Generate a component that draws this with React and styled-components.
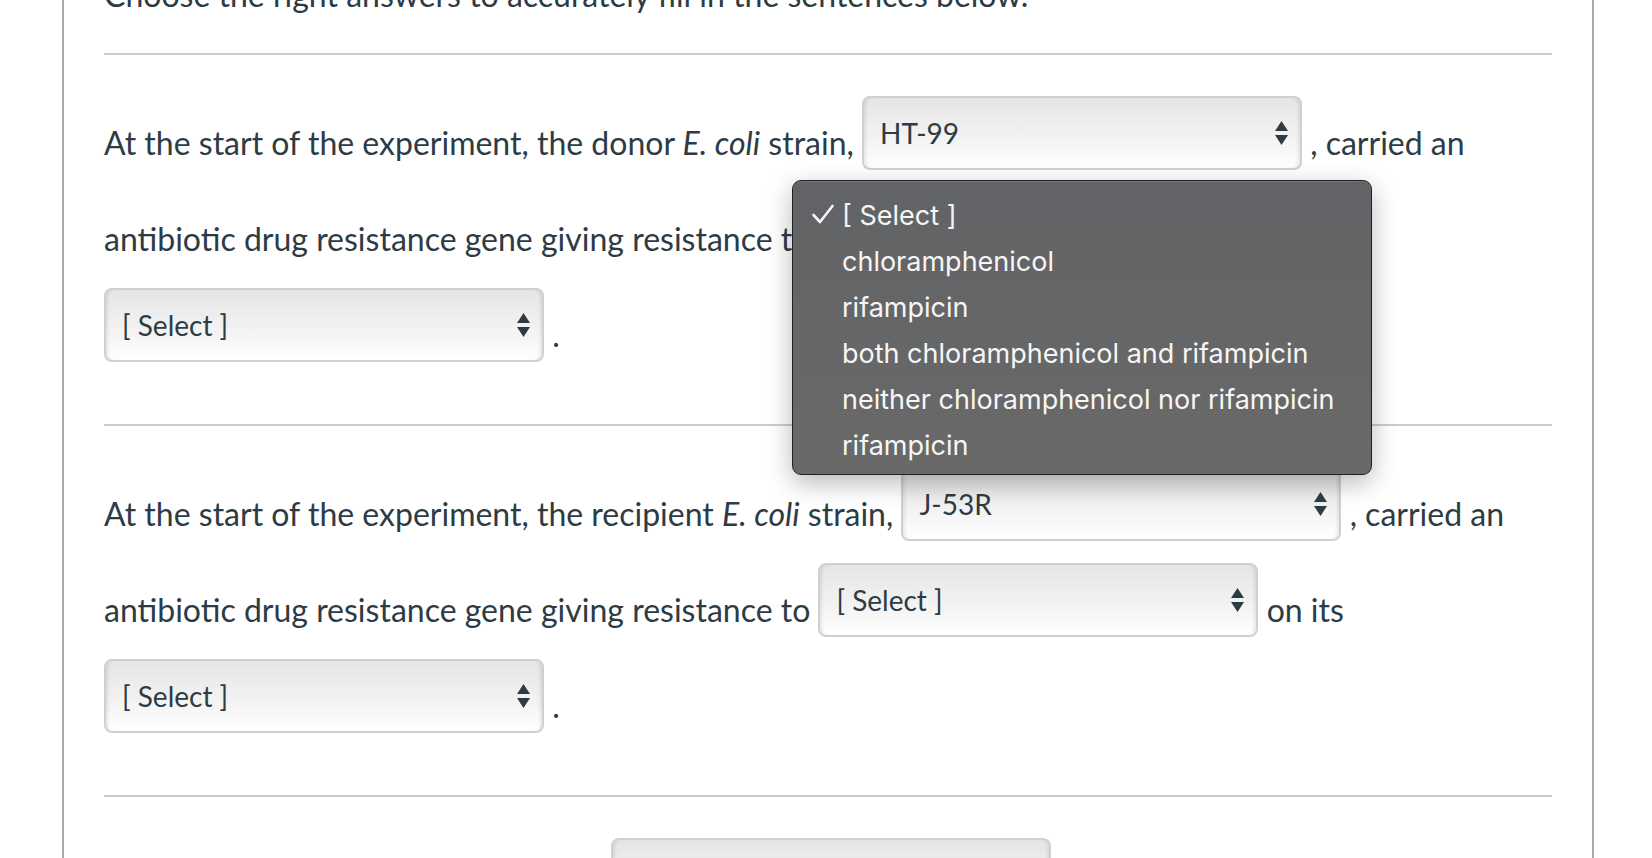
import styled, { createGlobalStyle } from 'styled-components';

const GlobalStyle = createGlobalStyle`
    html, body {
        margin: 0;
        padding: 0;
        background: #ffffff;
        overflow: hidden;
    }
    body {
        font-family: Lato, "Liberation Sans", sans-serif;
        color: #2d3b45;
    }
`;

const menuOptions = [
    '[ Select ]',
    'chloramphenicol',
    'rifampicin',
    'both chloramphenicol and rifampicin',
    'neither chloramphenicol nor rifampicin',
    'rifampicin',
];

function Arrows() {
    return (
        <svg width="13" height="24" viewBox="0 0 13 24">
            <path d="M0 10 L6.5 0 L13 10 Z" fill="#2d3b45" />
            <path d="M0 14 L13 14 L6.5 24 Z" fill="#2d3b45" />
        </svg>
    );
}

function Dropdown({ value, width }) {
    return (
        <SelectBox $width={width}>
            <span>{value}</span>
            <Arrows />
        </SelectBox>
    );
}

export default function App() {
    return (
        <Page>
            <GlobalStyle />
            <Panel>
                <Intro>Choose the right answers to accurately fill in the sentences below.</Intro>

                <Section>
                    <Sentence>
                        At the start of the experiment, the donor <i>E. coli</i> strain,{' '}
                        <Dropdown value="HT-99" />{' '}, carried an antibiotic drug resistance gene giving
                        resistance to <Dropdown value="[ Select ]" /> on its{' '}
                        <Dropdown value="[ Select ]" /> .
                    </Sentence>
                </Section>

                <Section>
                    <Sentence>
                        At the start of the experiment, the recipient <i>E. coli</i> strain,{' '}
                        <Dropdown value="J-53R" />{' '}, carried an antibiotic drug resistance gene giving
                        resistance to <Dropdown value="[ Select ]" /> on its{' '}
                        <Dropdown value="[ Select ]" /> .
                    </Sentence>
                </Section>

                <Section>
                    <Sentence>
                        Transconjugant cells were plated on{' '}
                        <Dropdown value="[ Select ]" /> plates.
                    </Sentence>
                </Section>
            </Panel>

            <OptionMenu>
                {menuOptions.map((option, i) => (
                    <OptionItem key={i}>
                        {i === 0 && (
                            <Check width="24" height="22" viewBox="0 0 24 22">
                                <path d="M2.5 12 L9 19 L21.5 3" fill="none" stroke="#f6f6f6" strokeWidth="2.6" strokeLinecap="round" strokeLinejoin="round" />
                            </Check>
                        )}
                        {option}
                    </OptionItem>
                ))}
            </OptionMenu>
        </Page>
    );
}

const Page = styled.div`
    position: relative;
    width: 1652px;
    height: 858px;
    overflow: hidden;
`;

const Panel = styled.div`
    box-sizing: border-box;
    width: 1532px;
    margin: -28px 0 0 62px;
    padding: 0 40px;
    border-left: 2px solid #aaaaaa;
    border-right: 2px solid #aaaaaa;
`;

const Intro = styled.p`
    margin: 0;
    padding-bottom: 36px;
    font-size: 32px;
    line-height: 45px;
`;

const Section = styled.div`
    border-top: 2px solid #c7cdd1;
    padding: 30px 0 51px;
`;

const Sentence = styled.p`
    margin: 0;
    font-size: 32px;
    line-height: 45px;

    i {
        font-style: italic;
    }
`;

const SelectBox = styled.span`
    display: inline-flex;
    align-items: center;
    justify-content: space-between;
    box-sizing: border-box;
    width: ${props => props.$width || 440}px;
    height: 74px;
    margin: 11px 0;
    padding: 0 12px 0 16px;
    vertical-align: 11px;
    border: 2px solid #cdd1d4;
    border-radius: 8px;
    background: linear-gradient(#e5e5e5, #f6f6f6 70%, #ffffff);
    box-shadow: inset 4px 0 4px -3px rgba(0, 0, 0, 0.12), inset -4px 0 4px -3px rgba(0, 0, 0, 0.12);
    font-size: 28px;
    line-height: 1;
    color: #2d3b45;

    svg {
        flex-shrink: 0;
    }
`;

const OptionMenu = styled.div`
    position: absolute;
    left: 792px;
    top: 180px;
    box-sizing: border-box;
    width: 580px;
    height: 295px;
    padding: 11px 0 8px;
    background: linear-gradient(#626366, #696969);
    border: 1px solid #222222;
    border-radius: 9px;
    box-shadow: 0 8px 26px rgba(0, 0, 0, 0.28), inset 0 1px 0 rgba(255, 255, 255, 0.12);
    font-family: Inter, "Noto Sans", sans-serif;
    font-size: 27px;
    color: #f6f6f6;
`;

const OptionItem = styled.div`
    position: relative;
    height: 46px;
    display: flex;
    align-items: center;
    padding-left: 49px;
`;

const Check = styled.svg`
    position: absolute;
    left: 18px;
    top: 11px;
`;
